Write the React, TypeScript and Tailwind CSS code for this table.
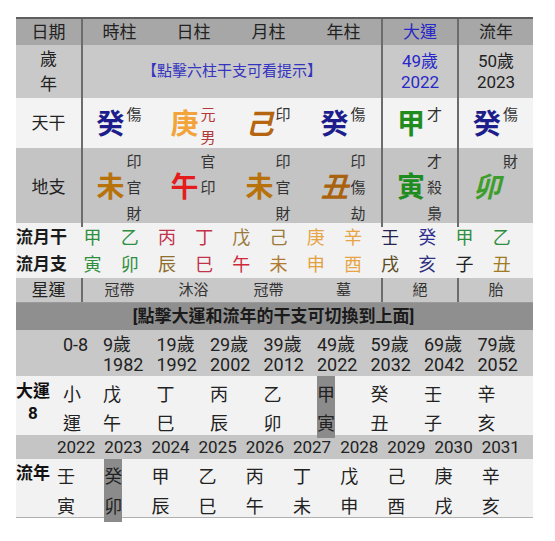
import React from "react";

const TOP = "grid grid-cols-[65px_75px_75px_75px_75px_76px_76px]";
const DIV = "border-l-2 border-[#6c6c6c]";

type StemProps = {
  ch: string;
  color: string;
  italic?: boolean;
  subs: string[];
  subColor?: string;
  slot: "a" | "b";
};

function Stem({ ch, color, italic, subs, subColor, slot }: StemProps) {
  return (
    <div
      className={`flex items-center justify-center h-full ${
        slot === "a" ? "pt-[6px]" : "pt-[1px]"
      }`}
    >
      <span
        className={`text-[28px] font-bold leading-none ${color} ${
          italic ? "italic" : ""
        } ${slot === "a" ? "mb-[5px]" : "mb-[0px]"}`}
      >
        {ch}
      </span>
      <div className="flex flex-col ml-[2px] w-[16px]">
        {subs.map((s, i) => (
          <span
            key={i}
            className={`text-[15px] ${
              slot === "a" ? "leading-[23px] h-[23px]" : "leading-[26px] h-[26px]"
            } ${subColor ?? "text-[#333]"}`}
          >
            {s}
          </span>
        ))}
      </div>
    </div>
  );
}

const monthStems: [string, string][] = [
  ["甲", "text-[#2f8f3f]"],
  ["乙", "text-[#2f8f3f]"],
  ["丙", "text-[#c2324a]"],
  ["丁", "text-[#c2324a]"],
  ["戊", "text-[#9c7a3c]"],
  ["己", "text-[#9c7a3c]"],
  ["庚", "text-[#e6a445]"],
  ["辛", "text-[#e6a445]"],
  ["壬", "text-[#23234f]"],
  ["癸", "text-[#2e2e8e]"],
  ["甲", "text-[#2f8f3f]"],
  ["乙", "text-[#2f8f3f]"],
];
const monthBranches: [string, string][] = [
  ["寅", "text-[#2f8f3f]"],
  ["卯", "text-[#2f8f3f]"],
  ["辰", "text-[#8f6f2f]"],
  ["巳", "text-[#c2324a]"],
  ["午", "text-[#d0283a]"],
  ["未", "text-[#b07a30]"],
  ["申", "text-[#e39f40]"],
  ["酉", "text-[#e6a445]"],
  ["戌", "text-[#5c4a22]"],
  ["亥", "text-[#2e2e80]"],
  ["子", "text-[#222]"],
  ["丑", "text-[#a07b22]"],
];

const ages: [string, string][] = [
  ["0-8", ""],
  ["9歲", "1982"],
  ["19歲", "1992"],
  ["29歲", "2002"],
  ["39歲", "2012"],
  ["49歲", "2022"],
  ["59歲", "2032"],
  ["69歲", "2042"],
  ["79歲", "2052"],
];
const dayun: [string, string, boolean][] = [
  ["小", "運", false],
  ["戊", "午", false],
  ["丁", "巳", false],
  ["丙", "辰", false],
  ["乙", "卯", false],
  ["甲", "寅", true],
  ["癸", "丑", false],
  ["壬", "子", false],
  ["辛", "亥", false],
];
const years = ["2022", "2023", "2024", "2025", "2026", "2027", "2028", "2029", "2030", "2031"];
const liunian: [string, string, boolean][] = [
  ["壬", "寅", false],
  ["癸", "卯", true],
  ["甲", "辰", false],
  ["乙", "巳", false],
  ["丙", "午", false],
  ["丁", "未", false],
  ["戊", "申", false],
  ["己", "酉", false],
  ["庚", "戌", false],
  ["辛", "亥", false],
];

export default function App() {
  return (
    <div className="font-['Roboto','Noto_Sans_CJK_TC',sans-serif] bg-white w-[555px] h-[541px] pt-[17px] pl-[16px] text-[#222]">
      <div className="w-[517px]">
        {/* header */}
        <div className={`${TOP} h-[28px] bg-[#a7a7a7] border-t-2 border-[#5f5f5f] text-[17px] leading-[26px] text-center`}>
          <div>日期</div>
          <div className={DIV}>時柱</div>
          <div>日柱</div>
          <div>月柱</div>
          <div>年柱</div>
          <div className={`${DIV} text-[#2828c8]`}>大運</div>
          <div className={DIV}>流年</div>
        </div>

        {/* age row */}
        <div className={`${TOP} h-[53px] bg-[#c9c9c9] text-[17px] text-center`}>
          <div className="flex flex-col items-center justify-center leading-[25px]">
            <span>歲</span>
            <span>年</span>
          </div>
          <div className={`${DIV} col-span-4 flex items-center justify-center text-[15px] text-[#3434c0]`}>
            【點擊六柱干支可看提示】
          </div>
          <div className={`${DIV} flex flex-col items-center justify-center leading-[21px] text-[#2828c8]`}>
            <span>49歲</span>
            <span>2022</span>
          </div>
          <div className={`${DIV} flex flex-col items-center justify-center leading-[21px]`}>
            <span>50歲</span>
            <span>2023</span>
          </div>
        </div>

        {/* 天干 */}
        <div className={`${TOP} h-[50px] bg-[#f3f3f3]`}>
          <div className="flex items-center justify-center text-[17px]">天干</div>
          <div className={DIV}>
            <Stem slot="a" ch="癸" color="text-[#1d1d8c]" subs={["傷", ""]} />
          </div>
          <div>
            <Stem slot="a" ch="庚" color="text-[#f2a33a]" subs={["元", "男"]} subColor="text-[#b23a3a]" />
          </div>
          <div>
            <Stem slot="a" ch="己" italic color="text-[#b5650f]" subs={["印", ""]} />
          </div>
          <div>
            <Stem slot="a" ch="癸" color="text-[#1d1d8c]" subs={["傷", ""]} />
          </div>
          <div className={DIV}>
            <Stem slot="a" ch="甲" color="text-[#1e8c1e]" subs={["才", ""]} />
          </div>
          <div className={DIV}>
            <Stem slot="a" ch="癸" color="text-[#1d1d8c]" subs={["傷", ""]} />
          </div>
        </div>

        {/* 地支 */}
        <div className={`${TOP} h-[75px] bg-[#c4c4c4]`}>
          <div className="flex items-center justify-center text-[17px]">地支</div>
          <div className={DIV}>
            <Stem slot="b" ch="未" color="text-[#b8720c]" subs={["印", "官", "財"]} />
          </div>
          <div>
            <Stem slot="b" ch="午" color="text-[#e51c1c]" subs={["官", "印", ""]} />
          </div>
          <div>
            <Stem slot="b" ch="未" color="text-[#b8720c]" subs={["印", "官", "財"]} />
          </div>
          <div>
            <Stem slot="b" ch="丑" italic color="text-[#a9620e]" subs={["印", "傷", "劫"]} />
          </div>
          <div className={DIV}>
            <Stem slot="b" ch="寅" color="text-[#1f8c1f]" subs={["才", "殺", "梟"]} />
          </div>
          <div className={DIV}>
            <Stem slot="b" ch="卯" italic color="text-[#3e9e2c]" subs={["財", "", ""]} />
          </div>
        </div>

        {/* 流月 */}
        <div className="h-[55px] bg-[#f2f2f2] pt-[1px]">
          <div className="grid grid-cols-[58px_repeat(12,37.2px)] h-[27px] leading-[27px] text-[18px]">
            <div className="text-[17px] font-bold text-[#1a1a1a]">流月干</div>
            {monthStems.map(([c, cl], i) => (
              <div key={i} className={`text-center ${cl}`}>
                {c}
              </div>
            ))}
          </div>
          <div className="grid grid-cols-[58px_repeat(12,37.2px)] h-[27px] leading-[27px] text-[18px]">
            <div className="text-[17px] font-bold text-[#1a1a1a]">流月支</div>
            {monthBranches.map(([c, cl], i) => (
              <div key={i} className={`text-center ${cl}`}>
                {c}
              </div>
            ))}
          </div>
        </div>

        {/* 星運 */}
        <div className={`${TOP} h-[25px] bg-[#c8c8c8] border-b border-[#9a9a9a] text-[15px] leading-[24px] text-center text-[#333]`}>
          <div className="text-[17px] text-[#222]">星運</div>
          <div className={DIV}>冠帶</div>
          <div>沐浴</div>
          <div>冠帶</div>
          <div>墓</div>
          <div className={DIV}>絕</div>
          <div className={DIV}>胎</div>
        </div>

        {/* banner */}
        <div className="h-[27px] bg-[#8f8f8f] text-[17px] font-bold leading-[27px] text-center text-[#1a1a1a] pr-[2px]">
          [點擊大運和流年的干支可切換到上面]
        </div>

        {/* ages */}
        <div className="grid grid-cols-[47px_40px_repeat(8,53.5px)] h-[46px] bg-[#c8c8c8] text-[18px] leading-[20px] pt-[5px]">
          <div />
          {ages.map(([a, y], i) => (
            <div key={i} className="flex flex-col">
              <span>{a}</span>
              <span>{y}</span>
            </div>
          ))}
        </div>

        {/* 大運 */}
        <div className="grid grid-cols-[47px_40px_repeat(8,53.5px)] h-[59px] bg-[#f2f2f2]">
          <div className="pt-[4px]">
            <div className="w-fit flex flex-col items-center text-[17px] font-bold leading-[22px] text-[#111]">
              <span>大運</span>
              <span>8</span>
            </div>
          </div>
          {dayun.map(([a, b, hl], i) => (
            <div key={i} className="h-full">
              <div className={`w-fit h-full flex flex-col pt-[4px] text-[18px] leading-[29px] ${hl ? "bg-[#8b8b8b]" : ""}`}>
                <span>{a}</span>
                <span>{b}</span>
              </div>
            </div>
          ))}
        </div>

        {/* years */}
        <div className="grid grid-cols-[41px_repeat(10,47.2px)] h-[24px] bg-[#c5c5c5] text-[17px] leading-[24px]">
          <div />
          {years.map((y) => (
            <div key={y}>{y}</div>
          ))}
        </div>

        {/* 流年 */}
        <div className="grid grid-cols-[41px_repeat(10,47.2px)] h-[59px] bg-[#f2f2f2] border-b border-[#b0b0b0]">
          <div className="pt-[3px] text-[17px] font-bold leading-[22px] text-[#111]">流年</div>
          {liunian.map(([a, b, hl], i) => (
            <div key={i} className="h-full">
              <div className={`w-fit h-full flex flex-col pt-[3px] text-[18px] leading-[30px] ${hl ? "bg-[#8b8b8b]" : ""}`}>
                <span>{a}</span>
                <span>{b}</span>
              </div>
            </div>
          ))}
        </div>
      </div>
    </div>
  );
}
